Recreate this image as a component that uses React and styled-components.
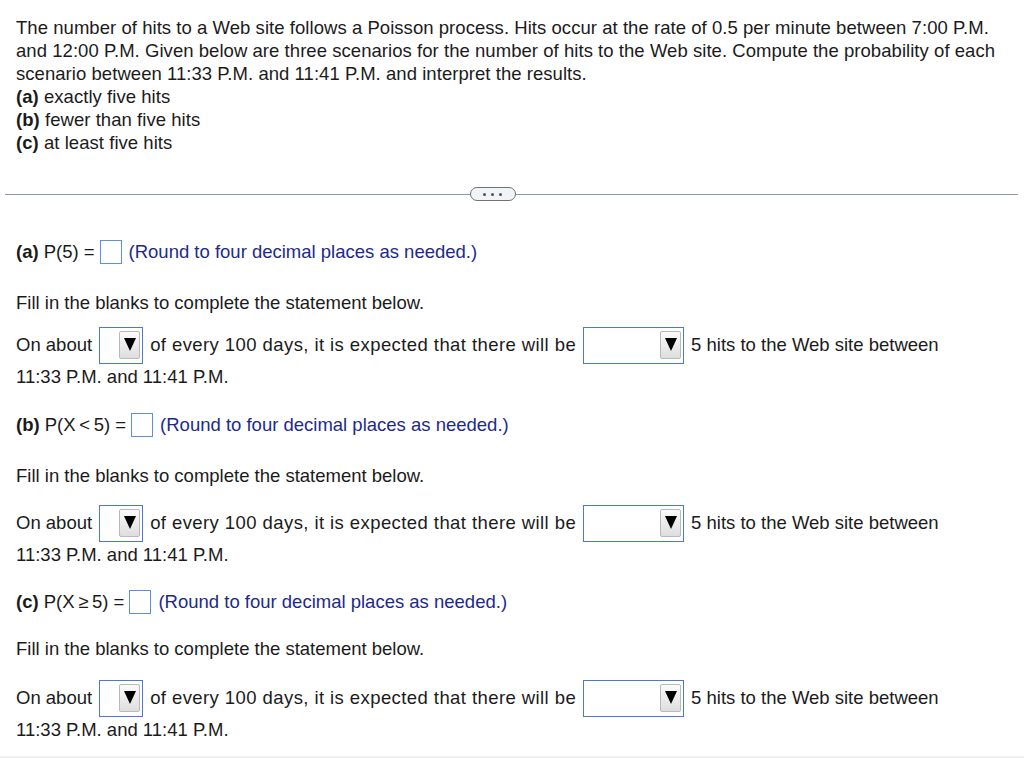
import React from 'react';
import styled, { createGlobalStyle } from 'styled-components';

const GlobalStyle = createGlobalStyle`
  html, body {
    margin: 0;
    padding: 0;
    background: #ffffff;
  }
  body {
    font-family: "Liberation Sans", Arial, Helvetica, sans-serif;
    font-size: 18.5px;
    color: #1b1b1b;
  }
`;

const Page = styled.div`
  height: 756px;
  border-bottom: 2px solid #efefef;
  overflow: hidden;
`;

const Question = styled.div`
  padding: 16px 16px 0;
  line-height: 23px;
  letter-spacing: 0.05px;
`;

const Line = styled.div`
  white-space: nowrap;
`;

const Divider = styled.div`
  display: flex;
  align-items: center;
  margin: 33px 6px 0 5px;
  height: 14px;
`;

const Rule = styled.div`
  flex: ${p => p.$grow} 1 0;
  height: 1px;
  background: #8e97a6;
`;

const MorePill = styled.div`
  width: 44px;
  height: 12px;
  border: 1.5px solid #69727f;
  border-radius: 8px;
  background: #f1f3f6;
  display: flex;
  align-items: center;
  justify-content: center;
  gap: 5px;
`;

const Dot = styled.span`
  width: 3px;
  height: 3px;
  border-radius: 50%;
  background: #4a5260;
`;

const Body = styled.div`
  padding: 0 16px;
`;

const ProbRow = styled.div`
  display: flex;
  align-items: center;
  height: 24px;
  margin-top: ${p => p.$mt}px;
  white-space: nowrap;
`;

const Label = styled.span`
  font-weight: bold;
  margin-right: 5px;
`;

const AnswerBox = styled.span`
  display: inline-block;
  width: 20px;
  height: 22px;
  border: 1px solid #5d8fe0;
  margin: 0 7px 0 5px;
`;

const Hint = styled.span`
  color: #1d2a8c;
`;

const Fill = styled.div`
  line-height: 23px;
  margin-top: ${p => p.$mt}px;
`;

const Statement = styled.div`
  margin-top: ${p => p.$mt}px;
`;

const StatementRow = styled.div`
  display: flex;
  align-items: center;
  gap: 7px;
  height: 31px;
  white-space: nowrap;
`;

const Middle = styled.span`
  letter-spacing: 0.42px;
`;

const StatementTail = styled.div`
  line-height: 31px;
`;

const Select = styled.span`
  display: inline-flex;
  justify-content: flex-end;
  align-items: stretch;
  box-sizing: border-box;
  width: ${p => p.$w}px;
  height: 37px;
  margin: -3px 0;
  padding: 3px 2px 4px;
  border: 1px solid #4a78d2;
  background: #fff;
`;

const SelectButton = styled.span`
  width: 21px;
  display: flex;
  align-items: center;
  justify-content: center;
  box-sizing: border-box;
  border: 1px solid #b9b9b9;
  border-radius: 2px;
  background: linear-gradient(#fbfbfb, #dedede);
`;

const Arrow = styled.span`
  width: 0;
  height: 0;
  border-left: 6px solid transparent;
  border-right: 6px solid transparent;
  border-top: 13px solid #000;
`;

const Dropdown = ({ width }) => (
  <Select $w={width}>
    <SelectButton>
      <Arrow />
    </SelectButton>
  </Select>
);

const parts = [
  { label: '(a)', expr: 'P(5) =', gaps: [39, 26.5, 16] },
  { label: '(b)', expr: 'P(X\u2009<\u20095) =', gaps: [21.5, 26.5, 21] },
  { label: '(c)', expr: 'P(X\u2009\u2265\u20095) =', gaps: [20.5, 22.5, 23] },
];

const App = () => (
  <>
    <GlobalStyle />
    <Page>
      <Question>
        <Line>The number of hits to a Web site follows a Poisson process. Hits occur at the rate of 0.5 per minute between 7:00 P.M.</Line>
        <Line>and 12:00 P.M. Given below are three scenarios for the number of hits to the Web site. Compute the probability of each</Line>
        <Line>scenario between 11:33 P.M. and 11:41 P.M. and interpret the results.</Line>
        <Line><b>(a)</b> exactly five hits</Line>
        <Line><b>(b)</b> fewer than five hits</Line>
        <Line><b>(c)</b> at least five hits</Line>
      </Question>

      <Divider>
        <Rule $grow={465} />
        <MorePill>
          <Dot />
          <Dot />
          <Dot />
        </MorePill>
        <Rule $grow={503} />
      </Divider>

      <Body>
        {parts.map(part => (
          <React.Fragment key={part.label}>
            <ProbRow $mt={part.gaps[0]}>
              <Label>{part.label}</Label>
              <span>{part.expr}</span>
              <AnswerBox />
              <Hint>(Round to four decimal places as needed.)</Hint>
            </ProbRow>
            <Fill $mt={part.gaps[1]}>Fill in the blanks to complete the statement below.</Fill>
            <Statement $mt={part.gaps[2]}>
              <StatementRow>
                <span>On about</span>
                <Dropdown width={44} />
                <Middle>of every 100 days, it is expected that there will be</Middle>
                <Dropdown width={101} />
                <span>5 hits to the Web site between</span>
              </StatementRow>
              <StatementTail>11:33 P.M. and 11:41 P.M.</StatementTail>
            </Statement>
          </React.Fragment>
        ))}
      </Body>
    </Page>
  </>
);

export default App;
